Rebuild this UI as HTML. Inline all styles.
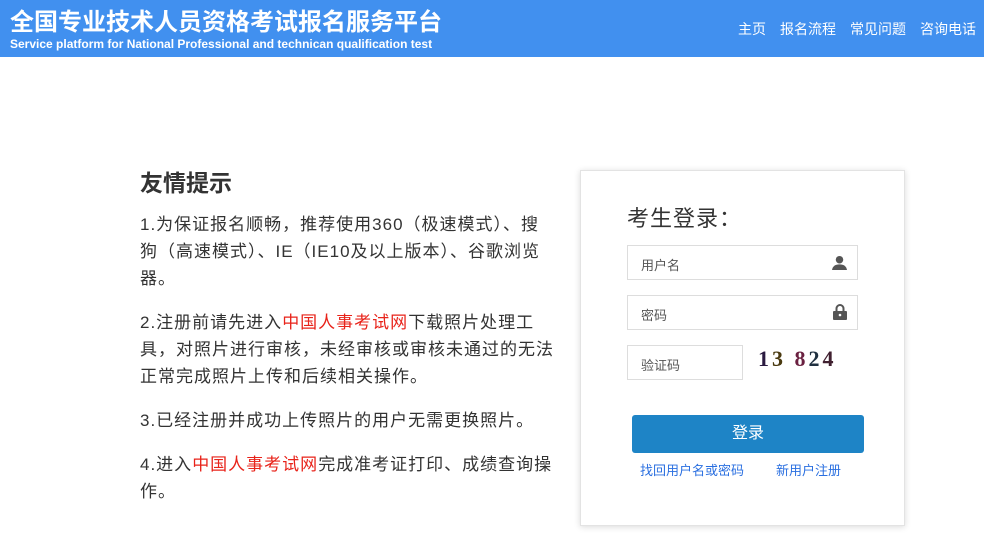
<!DOCTYPE html>
<html><head><meta charset="utf-8"><style>
*{margin:0;padding:0;box-sizing:border-box}
body{width:984px;height:556px;background:#fff;font-family:"Liberation Sans","Noto Sans CJK SC",sans-serif;position:relative;overflow:hidden}
.hd{position:absolute;left:0;top:0;width:984px;height:57px;background:#4190ef}
.t1{position:absolute;left:10px;top:2px;color:#fff;font-size:24px;font-weight:bold;letter-spacing:0px}
.t2{position:absolute;left:10px;top:37px;color:#fff;font-size:12px;font-weight:bold}
.nav{position:absolute;right:8px;top:19px;color:#fff;font-size:14px}
.nav span{margin-left:14px}
.left{position:absolute;left:140px;top:168px;width:440px;color:#333;white-space:nowrap}
.left h2{font-size:23px;font-weight:bold;margin-bottom:13px;line-height:30px}
.left p{font-size:17px;line-height:27px;margin-bottom:17px;letter-spacing:1px}
.red{color:#e8231a}
.card{position:absolute;left:580px;top:170px;width:325px;height:356px;border:1px solid #e3e3e3;box-shadow:0 1px 6px rgba(0,0,0,.15);background:#fff}
.ct{position:absolute;left:46px;top:30px;font-size:22px;color:#333;letter-spacing:1px}
.in{position:absolute;left:46px;width:231px;height:35px;border:1px solid #ddd;font-size:13px;color:#555;padding:9px 0 0 13px}
.btn{position:absolute;left:51px;top:244px;width:232px;height:38px;background:#1e84c6;border-radius:3px;color:#fff;font-size:16px;text-align:center;line-height:38px}
.lk{position:absolute;top:289px;font-size:13px;color:#2a6fe0}
.cap{position:absolute;left:177px;top:175px;font-size:22px;font-weight:bold;letter-spacing:3px;font-family:"Liberation Serif",serif}
</style></head><body>
<div class="hd">
<div class="t1">全国专业技术人员资格考试报名服务平台</div>
<div class="t2">Service platform for National Professional and technican qualification test</div>
<div class="nav"><span>主页</span><span>报名流程</span><span>常见问题</span><span>咨询电话</span></div>
</div>
<div class="left">
<h2>友情提示</h2>
<p>1.为保证报名顺畅，推荐使用360（极速模式）、搜<br>狗（高速模式）、IE（IE10及以上版本）、谷歌浏览<br>器。</p>
<p>2.注册前请先进入<span class="red">中国人事考试网</span>下载照片处理工<br>具，对照片进行审核，未经审核或审核未通过的无法<br>正常完成照片上传和后续相关操作。</p>
<p>3.已经注册并成功上传照片的用户无需更换照片。</p>
<p>4.进入<span class="red">中国人事考试网</span>完成准考证打印、成绩查询操<br>作。</p>
</div>
<div class="card">
<div class="ct">考生登录：</div>
<div class="in" style="top:74px">用户名<svg style="position:absolute;right:10px;top:9px" width="15" height="15" viewBox="0 0 16 16"><circle cx="8" cy="5" r="4" fill="#555"/><path d="M0 16 Q1 10 8 10 Q15 10 16 16Z" fill="#555"/></svg></div>
<div class="in" style="top:124px">密码<svg style="position:absolute;right:10px;top:8px" width="14" height="16" viewBox="0 0 14 16"><path d="M3.5 7V4.5a3.5 3.5 0 0 1 7 0V7" stroke="#555" stroke-width="2" fill="none"/><rect x="0" y="7" width="14" height="9" rx="1" fill="#555"/><circle cx="7" cy="11" r="1.3" fill="#fff"/></svg></div>
<div class="in" style="top:174px;width:116px">验证码</div>
<div class="cap"><span style="color:#2a1a40">1</span><span style="color:#4a3a10">3</span> <span style="color:#6a2040">8</span><span style="color:#203040">2</span><span style="color:#402030">4</span></div>
<div class="btn">登录</div>
<div class="lk" style="left:59px">找回用户名或密码</div>
<div class="lk" style="left:195px">新用户注册</div>
</div>
</body></html>
